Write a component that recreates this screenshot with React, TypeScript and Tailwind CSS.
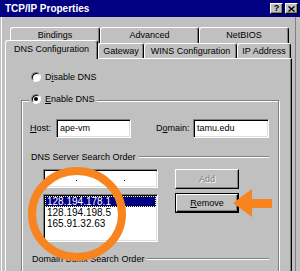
import React from "react";

function Tab({ className, children }: { className: string; children: React.ReactNode }) {
  return (
    <div
      className={
        "flex items-center justify-center rounded-t-[3px] bg-[#c0c0c0] border-l border-t border-white border-r border-r-black shadow-[inset_-1px_0_0_#808080] " +
        className
      }
    >
      {children}
    </div>
  );
}

function Radio({ checked }: { checked?: boolean }) {
  return (
    <span className="w-[10px] h-[10px] rounded-full bg-white border border-t-[#808080] border-l-[#808080] border-b-white border-r-white shadow-[inset_1px_1px_0_#000] flex items-center justify-center shrink-0">
      {checked && <span className="w-[4px] h-[4px] rounded-full bg-black" />}
    </span>
  );
}

function Field({ className, children }: { className: string; children?: React.ReactNode }) {
  return (
    <div
      className={
        "bg-white border border-t-[#808080] border-l-[#808080] border-b-white border-r-white shadow-[inset_1px_1px_0_#000,inset_-1px_-1px_0_#dfdfdf] " +
        className
      }
    >
      {children}
    </div>
  );
}

function CapBtn({ children }: { children: React.ReactNode }) {
  return (
    <div className="w-[13px] h-[11px] bg-[#c0c0c0] border border-t-white border-l-white border-r-black border-b-black shadow-[inset_-1px_-1px_0_#808080] flex items-center justify-center">
      {children}
    </div>
  );
}

export default function App() {
  return (
    <div className="relative w-[300px] h-[271px] overflow-hidden bg-[#c0c0c0] font-['Liberation_Sans',Arial,sans-serif] text-[9px] leading-none text-black">
      {/* title bar */}
      <div className="h-[17px] bg-[#000080] flex items-center pl-[5px] pr-[2px]">
        <span className="text-white font-bold text-[10px]">TCP/IP Properties</span>
        <div className="ml-auto flex gap-[2px]">
          <CapBtn>
            <span className="font-bold text-[9px] leading-none">?</span>
          </CapBtn>
          <CapBtn>
            <svg width="7" height="6" viewBox="0 0 7 6">
              <path d="M0.5 0.5 L6.5 5.5 M6.5 0.5 L0.5 5.5" stroke="#000" strokeWidth="1.4" />
            </svg>
          </CapBtn>
        </div>
      </div>

      {/* body */}
      <div className="flex h-[254px]">
        <div className="ml-[1px] w-[1px] bg-white" />
        <div className="ml-[3px] w-[287px] flex flex-col">
          {/* back tab row */}
          <div className="mt-[10px] pl-[5px] flex h-[16px]">
            <Tab className="w-[90px] h-[16px]">Bindings</Tab>
            <Tab className="w-[99px] h-[16px]">Advanced</Tab>
            <Tab className="w-[90px] h-[16px]">NetBIOS</Tab>
          </div>
          {/* front tab row */}
          <div className="relative z-10 mt-[-3px] mb-[-1px] flex items-start h-[19px]">
            <Tab className="w-[93px] h-[19px] pb-[2px]">DNS Configuration</Tab>
            <Tab className="w-[46px] h-[15px] mt-[3px]">Gateway</Tab>
            <Tab className="w-[93px] h-[15px] mt-[3px]">WINS Configuration</Tab>
            <Tab className="w-[54px] h-[15px] mt-[3px]">IP Address</Tab>
          </div>
          {/* panel */}
          <div className="flex-1 overflow-hidden border-t border-l border-white border-r border-r-black shadow-[inset_-1px_0_0_#808080]">
            <div className="mt-[12px] pl-[25px] h-[12px] flex items-center">
              <Radio />
              <span className="ml-[4px]">
                D<u>i</u>sable DNS
              </span>
            </div>
            {/* group box */}
            <div className="relative mt-[17px] ml-[15px] w-[258px] h-[200px] border border-[#808080] shadow-[inset_1px_1px_0_#fff,1px_1px_0_#fff]">
              <div className="absolute top-[-8px] left-[7px] h-[12px] px-[2px] bg-[#c0c0c0] flex items-center">
                <Radio checked />
                <span className="ml-[4px]">
                  <u>E</u>nable DNS
                </span>
              </div>
              {/* host / domain */}
              <div className="mt-[18px] pl-[8px] flex items-center h-[19px]">
                <span className="w-[26px]">
                  <u>H</u>ost:
                </span>
                <Field className="w-[75px] h-[19px] flex items-center pl-[3px]">ape-vm</Field>
                <span className="ml-[25px] w-[37px]">
                  D<u>o</u>main:
                </span>
                <Field className="w-[76px] h-[19px] flex items-center pl-[3px]">tamu.edu</Field>
              </div>
              {/* DNS server order */}
              <div className="mt-[13px] pl-[9px] pr-[9px] h-[12px] flex items-center">
                <span>DNS Server Search Order</span>
                <div className="flex-1 ml-[3px] border-t border-[#808080] border-b border-b-white" />
              </div>
              <div className="mt-[6px] pl-[21px] flex">
                <div className="w-[115px] flex flex-col">
                  <Field className="h-[19px] flex items-center">
                    <div className="flex-1 flex justify-around pl-[20px] pr-[20px]">
                      <span className="w-[1px] h-[1px] bg-black mt-[4px]" />
                      <span className="w-[1px] h-[1px] bg-black mt-[4px]" />
                      <span className="w-[1px] h-[1px] bg-black mt-[4px]" />
                    </div>
                  </Field>
                  <Field className="mt-[6px] h-[48px] pt-[1px] pl-[1px] pr-[1px] text-[10px]">
                    <div className="h-[11px] bg-[#000080] text-white flex items-center pl-[2px] outline-1 outline-dotted outline-[#ffff80] -outline-offset-1">
                      128.194.178.1
                    </div>
                    <div className="h-[11px] flex items-center pl-[2px]">128.194.198.5</div>
                    <div className="h-[11px] flex items-center pl-[2px]">165.91.32.63</div>
                  </Field>
                </div>
                <div className="ml-[17px] w-[64px] flex flex-col">
                  <div className="h-[20px] flex items-center justify-center border border-t-white border-l-white border-r-black border-b-black shadow-[inset_-1px_-1px_0_#808080] text-[#808080] [text-shadow:1px_1px_0_#fff]">
                    Add
                  </div>
                  <div className="mt-[4px] h-[20px] border border-black">
                    <div className="h-full flex items-center justify-center border border-t-white border-l-white border-r-black border-b-black shadow-[inset_-1px_-1px_0_#808080]">
                      <span>
                        <u>R</u>emove
                      </span>
                    </div>
                  </div>
                </div>
              </div>
              {/* domain suffix */}
              <div className="mt-[11px] pl-[10px] pr-[9px] h-[12px] flex items-center">
                <span>Domain Suffix Search Order</span>
                <div className="flex-1 ml-[3px] border-t border-[#808080] border-b border-b-white" />
              </div>
            </div>
          </div>
        </div>
        <div className="ml-[3px] w-[1px] bg-[#808080]" />
      </div>

      {/* annotations */}
      <svg className="absolute inset-0 pointer-events-none" width="300" height="271" viewBox="0 0 300 271">
        <ellipse cx="77" cy="214" rx="45" ry="43" fill="none" stroke="#f7841f" strokeWidth="8" />
        <polygon points="233,203 252,189 252,199 272,199 272,208 252,208 252,217" fill="#f7841f" />
      </svg>
    </div>
  );
}
